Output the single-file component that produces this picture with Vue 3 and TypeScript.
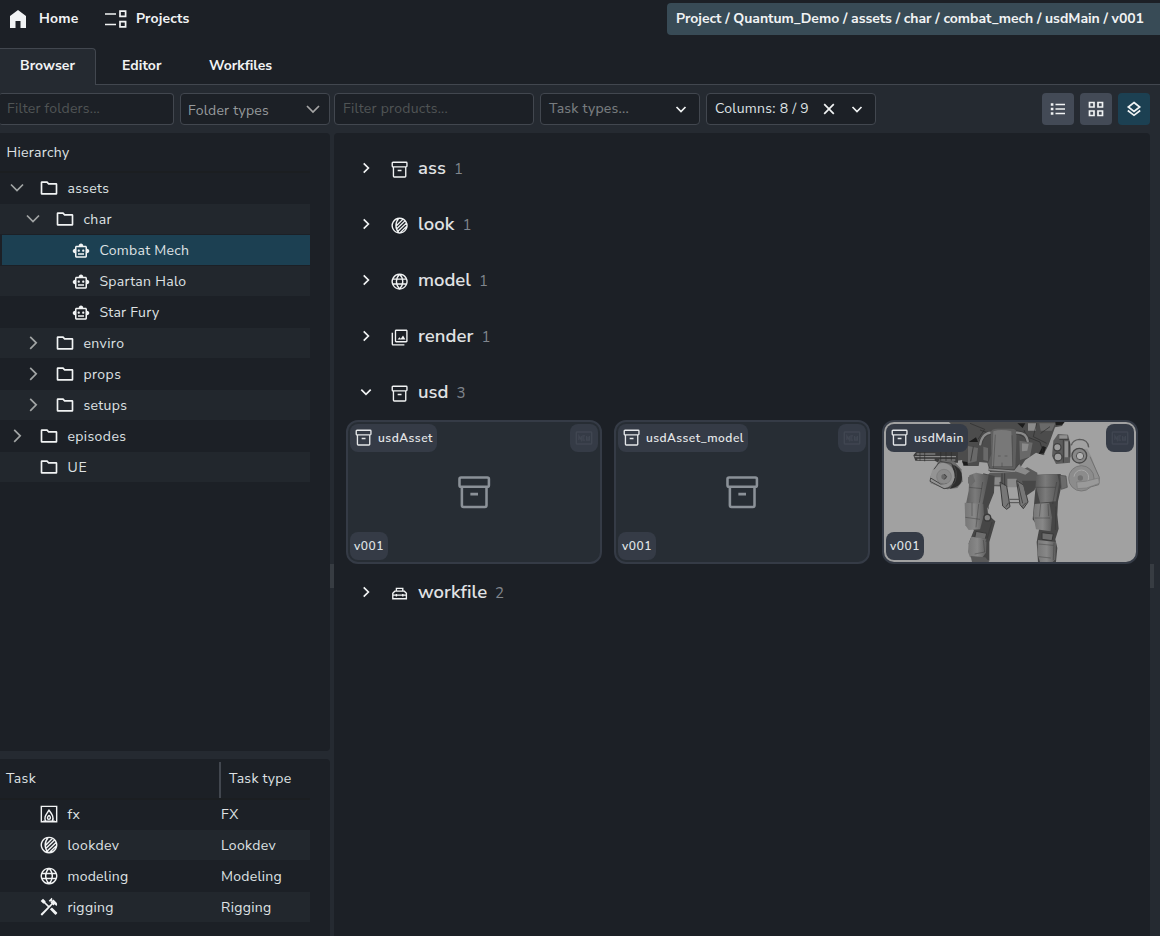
<script setup lang="ts">
interface TreeRow { label: string; depth: number; w: number; icon: string; state: 'open' | 'closed' | 'leaf'; selected?: boolean }
interface Group { name: string; count: number; icon: string; w: number; open?: boolean }

// Tracks a label out (or in) so that it fills the given width in pixels.
const vFit = {
  mounted(el: HTMLElement, binding: { value: number }) {
    const natural = el.getBoundingClientRect().width
    const count = (el.textContent || '').trim().length
    if (count > 0) el.style.letterSpacing = `${(binding.value - natural) / count}px`
  },
}

const solid: Record<string, string> = {
  home: 'M4 21V9l8-6 8 6v12h-5.500v-7h-5v7z',
  folder: 'M9.170 6l2 2H20v10H4V6h5.170M10 4H3.500Q2 4 2 5.500V18.500Q2 20 3.500 20h17Q22 20 22 18.500V7.500Q22 6 20.500 6H12l-2-2z',
  robot: 'M20 9V7c0-1.1-.9-2-2-2h-3c0-1.660-1.340-3-3-3S9 3.340 9 5H6c-1.100 0-2 .9-2 2v2c-1.660 0-3 1.340-3 3s1.340 3 3 3v4c0 1.100.9 2 2 2h12c1.100 0 2-.9 2-2v-4c1.660 0 3-1.340 3-3s-1.340-3-3-3zm-2 10H6V7h12v12zm-9-6c-.83 0-1.500-.67-1.500-1.500S8.170 10 9 10s1.500.67 1.500 1.500S9.830 13 9 13zm7.500-1.500c0 .83-.67 1.500-1.500 1.500s-1.500-.67-1.500-1.500.67-1.500 1.500-1.500 1.500.67 1.500 1.500zM8 15h8v2H8v-2z',
  photos: 'M20.300 3.700v12.600H7.700V3.700h12.600m0-1.700H7.700C6.800 2 6 2.800 6 3.700v12.600c0 .9.8 1.700 1.700 1.700h12.600c.9 0 1.700-.8 1.700-1.700V3.700C22 2.800 21.200 2 20.300 2zM9.500 14.500l2.300-3 1.700 2 2.800-4 3 5zM2 6v14c0 1.100.9 2 2 2h14v-1.800H3.800V6H2z',
  tools: 'M21.670 18.670l-6.100-6.100-2.540 2.100 6.100 6.200q.7.600 1.400 0l1.100-1.200q.6-.5.040-1zM17.340 10.190l1.410-1.410 2.120 2.120c1.170-1.170 1.170-3.070 0-4.240l-3.540-3.540-1.410 1.410V1.710L15.220 1l-3.540 3.540.71.71h2.830l-1.410 1.410 1.060 1.060-2.890 2.890-4.130-4.130V5.060L4.830 2.040 2 4.870 5.030 7.900h1.410l4.130 4.130L2.300 20.100q-.5.600 0 1.200l.7.700q.6.500 1.200 0L16.280 9.140z',
}
const lined: Record<string, string> = {
  archive: 'M3.800 2.800h16.400q1 0 1 1v3.800q0 1-1 1H3.800q-1 0-1-1V3.800q0-1 1-1zM4.300 8.600v11.600q0 1 1 1h13.400q1 0 1-1V8.600M9.600 13.200h4.800',
  look: 'M12 2.800a9.200 9.200 0 1 0 .01 0zM11 3.200C6.200 8 6.200 16 11 20.800M8 12.200L16 4.200M8.500 16L19 5.800M10.200 18.800L20.800 8.600M12.800 20.800L21 12.800',
  globe: 'M12 2.800a9.200 9.200 0 1 0 .01 0zM12 2.800C6.700 8 6.700 16 12 21.200C17.300 16 17.300 8 12 2.800M3.600 9h16.800M3.600 15h16.800',
  toolbox: 'M3.500 18.500V11.500L6 9h12L20.500 11.500V18.500zM8 9V5.500h8V9M3.500 14h17M8 12.500v3M16 12.500v3',
  fire: 'M2.800 2.800h18.400v18.400H2.800zM8 20.500C5.500 16 8.500 13 12 7.500C15.500 12 18.500 16 16 20.500M12 13.500C9.500 16 9.500 18 12 18.500C14.500 18 14 15.500 12 13.500M5 20.500h14',
}

const tree: TreeRow[] = [
  { label: 'assets', depth: 0, w: 42, icon: 'folder', state: 'open' },
  { label: 'char', depth: 1, w: 28.5, icon: 'folder', state: 'open' },
  { label: 'Combat Mech', depth: 2, w: 90, icon: 'robot', state: 'leaf', selected: true },
  { label: 'Spartan Halo', depth: 2, w: 87, icon: 'robot', state: 'leaf' },
  { label: 'Star Fury', depth: 2, w: 60, icon: 'robot', state: 'leaf' },
  { label: 'enviro', depth: 1, w: 41, icon: 'folder', state: 'closed' },
  { label: 'props', depth: 1, w: 38, icon: 'folder', state: 'closed' },
  { label: 'setups', depth: 1, w: 44, icon: 'folder', state: 'closed' },
  { label: 'episodes', depth: 0, w: 59, icon: 'folder', state: 'closed' },
  { label: 'UE', depth: 0, w: 20, icon: 'folder', state: 'leaf' },
]
const tasks = [
  { label: 'fx', type: 'FX', icon: 'fire', w: 13, tw: 18 },
  { label: 'lookdev', type: 'Lookdev', icon: 'look', w: 52, tw: 55 },
  { label: 'modeling', type: 'Modeling', icon: 'globe', w: 61, tw: 61 },
  { label: 'rigging', type: 'Rigging', icon: 'tools', w: 46.5, tw: 50.5 },
]
const groups: Group[] = [
  { name: 'ass', count: 1, icon: 'archive', w: 28 },
  { name: 'look', count: 1, icon: 'look', w: 36.5 },
  { name: 'model', count: 1, icon: 'globe', w: 53 },
  { name: 'render', count: 1, icon: 'photos', w: 55.5 },
  { name: 'usd', count: 3, icon: 'archive', w: 30.5 },
  { name: 'workfile', count: 2, icon: 'toolbox', w: 69 },
]
groups[4].open = true
const cards = [
  { name: 'usdAsset', w: 55, picture: false },
  { name: 'usdAsset_model', w: 98, picture: false },
  { name: 'usdMain', w: 50, picture: true },
]
</script>

<template>
  <div class="app">
    <header class="top">
      <nav class="links">
        <a class="link home"><svg class="i24" viewBox="0 0 24 24"><path class="fill" :d="solid.home" /></svg><span v-fit="39.500">Home</span></a>
        <a class="link projects">
          <svg class="proj" viewBox="0 0 22 18"><path class="line" d="M0 4h11M0 14.500h11M15 1.200h5.600v5.200H15zM15 11.700h5.600v5.200H15z" /></svg>
          <span v-fit="53.500">Projects</span>
        </a>
      </nav>
      <div class="crumbs"><span v-fit="468">Project / Quantum_Demo / assets / char / combat_mech / usdMain / v001</span></div>
    </header>

    <nav class="tabs">
      <a class="tab active"><span v-fit="55">Browser</span></a>
      <a class="tab editor"><span v-fit="39.500">Editor</span></a>
      <a class="tab work"><span v-fit="63">Workfiles</span></a>
      <div class="rule"></div>
    </nav>

    <div class="filters">
      <div class="box folders"><span v-fit="93" class="hint">Filter folders...</span></div>
      <div class="box types"><span v-fit="81" class="soft">Folder types</span><svg class="chev big" viewBox="0 0 14 14"><path class="line" d="M1 4l6 6 6-6" /></svg></div>
      <div class="box products"><span v-fit="105" class="hint">Filter products...</span></div>
      <div class="box tasktypes"><span v-fit="80" class="mid">Task types...</span><svg class="chev" viewBox="0 0 14 14"><path class="line" d="M2.500 5l4.500 4.500L11.500 5" /></svg></div>
      <div class="box columns">
        <span v-fit="94">Columns: 8 / 9</span>
        <svg class="chev cross" viewBox="0 0 14 14"><path class="line" d="M2.200 2.200l9.600 9.600M11.800 2.200l-9.600 9.600" /></svg>
        <svg class="chev" viewBox="0 0 14 14"><path class="line" d="M2.500 5l4.500 4.500L11.500 5" /></svg>
      </div>
      <div class="buttons">
        <button><svg viewBox="0 0 16 16"><path class="line thin" d="M5.500 3.500H15M5.500 8H15M5.500 12.500H15" /><path class="fill" d="M.8 2.200h2.600v2.600H.8zM.8 6.700h2.600v2.600H.8zM.8 11.200h2.600v2.600H.8z" /></svg></button>
        <button><svg viewBox="0 0 16 16"><path class="line" d="M1.500 1.500h4.500v4.500h-4.500zM10 1.500h4.500v4.500H10zM1.500 10h4.500v4.500h-4.500zM10 10h4.500v4.500H10z" /></svg></button>
        <button class="on"><svg viewBox="0 0 16 16"><path class="line" d="M8 1.500L13.700 6 8 10.500 2.300 6zM1.800 9.500L8 14.300l6.200-4.800" /></svg></button>
      </div>
    </div>

    <div class="body">
      <aside>
        <section class="panel hierarchy">
          <div class="head"><span v-fit="63">Hierarchy</span></div>
          <div v-for="r in tree" :key="r.label" class="row" :class="['d' + r.depth, { selected: r.selected }]">
            <svg class="arrow" viewBox="0 0 14 14">
              <path v-if="r.state === 'open'" class="line" d="M1 3.500l6 6 6-6" />
              <path v-if="r.state === 'closed'" class="line" d="M4.200 .8l6 6-6 6" />
            </svg>
            <svg class="ico" :class="r.icon" viewBox="0 0 24 24"><path class="fill" :d="solid[r.icon]" /></svg>
            <span v-fit="r.w" class="text">{{ r.label }}</span>
          </div>
        </section>
        <section class="panel tasks">
          <div class="head two"><div class="first"><span v-fit="30">Task</span></div><div class="second"><span v-fit="62.500">Task type</span></div></div>
          <div v-for="t in tasks" :key="t.label" class="row d0">
            <span class="arrow"></span>
            <svg class="ico" viewBox="0 0 24 24">
              <path v-if="solid[t.icon]" class="fill" :d="solid[t.icon]" />
              <path v-else class="line" :d="lined[t.icon]" />
            </svg>
            <div class="name text"><span v-fit="t.w">{{ t.label }}</span></div>
            <span v-fit="t.tw" class="text">{{ t.type }}</span>
          </div>
        </section>
      </aside>
      <div class="grip"><i></i></div>
      <main class="panel">
        <template v-for="g in groups" :key="g.name">
          <div class="group">
            <svg class="garrow" viewBox="0 0 14 14"><path class="line" :d="g.open ? 'M2.300 4.700L7 9.400l4.700-4.700' : 'M4.700 2.300L9.400 7l-4.700 4.700'" /></svg>
            <svg class="gico" viewBox="0 0 24 24">
              <path v-if="solid[g.icon]" class="fill" :d="solid[g.icon]" />
              <path v-else class="line" :d="lined[g.icon]" />
            </svg>
            <span v-fit="g.w" class="gname">{{ g.name }}</span>
            <span class="count">{{ g.count }}</span>
          </div>
          <div v-if="g.open" class="cards">
            <article v-for="c in cards" :key="c.name" class="card">
              <svg v-if="c.picture" class="mech" viewBox="42 36 756 420" preserveAspectRatio="none">
                <defs>
                  <linearGradient id="plate" x1="0" x2="1"><stop offset="0" stop-color="#5c5c5c" /><stop offset=".4" stop-color="#7b7b7b" /><stop offset="1" stop-color="#555" /></linearGradient>
                  <linearGradient id="shin" x1="0" x2="1"><stop offset="0" stop-color="#777" /><stop offset=".5" stop-color="#888" /><stop offset="1" stop-color="#5e5e5e" /></linearGradient>
                </defs>
                <!-- shoulders and torso mass -->
                <path fill="#4c4c4c" d="M237 36H583L576 48 555 52 550 66 536 104 520 136 498 128 466 150 444 182 360 186 352 158 328 156 326 168H280L276 150 236 156 200 150V120L294 100z" />
                <path fill="#696969" d="M294 108l30 6-4 40-26 6zM340 110l14 4v40l-14-4zM448 92l40 6-8 42-30 10zM508 40h48l-10 22h-34z" />
                <path fill="#8a8a8a" d="M474 40h24v22h-24zM456 100l20 2-4 20-16 2z" />
                <path fill="#1c1c1c" d="M518 108l10 4-6 18-16 2zM296 96l22-14 6 14zM442 40h24l-8 14zM276 154l16 2 2 10h-12zM556 36h28l-8 8-18 2z" />
                <path class="ink" d="M300 40l44 18-20 30M462 60l8 20 40 16 12 38M500 40l-10 40 40 20M440 70l30 14M310 110l-8 44M330 60l34 12M512 70l28-20" />
                <!-- rotary gun -->
                <path fill="#3c3c3c" d="M130 136l8-10h62l22-8 42 6v34H206l-12-6h-58z" />
                <path stroke="#9a9a9a" stroke-width="3" d="M140 132h56M134 140h124M142 148h52M208 150h48" />
                <path class="ink" d="M150 126v26M164 126v28M212 122v32M228 124v34M244 122v30" />
                <!-- arms -->
                <path fill="#6c6c6c" d="M206 152l46 2 22 24 4 36-16 20-30 4-50-18v-22z" />
                <path fill="#2e2e2e" d="M244 162q32 10 32 40t-36 34q22-34 4-74z" />
                <path fill="#949494" d="M182 202q4-42 38-44 34 6 34 44-4 26-30 33l-42-16z" />
                <path fill="none" stroke="#454545" stroke-width="3" d="M192 178l18-24 34 6q22 18 12 54-12 22-34 22l-42-22 2-10 30 18 18-2" />
                <circle cx="222" cy="200" r="22" fill="#8a8a8a" stroke="#777" stroke-width="2" />
                <circle cx="222" cy="200" r="8" fill="#686868" />
                <path class="ink" d="M222 193l8 7-8 9" />
                <path fill="#5c5c5c" d="M550 92l14-20 30 2 8 30-2 54-42 4-12-24z" />
                <g fill="#9c9c9c" stroke="#424242" stroke-width="4"><circle cx="562" cy="112" r="11" /><circle cx="564" cy="141" r="12" /></g>
                <path fill="#909090" d="M568 76h24v10h-24zM584 94h10v48h-10z" />
                <path class="ink" d="M580 90v68M598 94l2 48M568 88h28" />
                <path fill="none" stroke="#5b5b5b" stroke-width="4" d="M604 106q4-16 24-18 26 0 28 24" />
                <path fill="#919191" d="M610 120l42-4 12 24 24 64-2 20-34 2z" />
                <path fill="none" stroke="#707070" stroke-width="3" d="M660 140l28 62-2 22-36 10" />
                <circle cx="628" cy="137" r="22" fill="#888" stroke="#494949" stroke-width="4" />
                <circle cx="630" cy="138" r="11" fill="#b1b1b1" stroke="#555" stroke-width="3" />
                <circle cx="634" cy="205" r="38" fill="#8c8c8c" stroke="#777" stroke-width="3" />
                <path fill="none" stroke="#a8a8a8" stroke-width="3" d="M612 200a22 22 0 1 1 24 24" />
                <circle cx="631" cy="204" r="8" fill="#727272" />
                <path fill="#9a9a9a" stroke="#777" stroke-width="2" d="M620 216l26-2 40-10 2 16-38 14-28 2z" />
                <!-- cockpit -->
                <path fill="#5f5f5f" d="M362 66q4-10 18-10h44q16 0 16 12l-4 110-70 8-12-26 10-28z" />
                <path fill="#787878" d="M370 64q24-8 54 0l4 104H366z" />
                <path fill="none" stroke="#424242" stroke-width="12" d="M362 68q-26 2-32 38M438 68q32-2 36 28" />
                <path fill="none" stroke="#8a8a8a" stroke-width="7" d="M362 68q-26 2-32 38M438 68q32-2 36 28" />
                <path class="ink fine" d="M376 74l-6 102M426 76l2 94M384 138h8M404 138h8M396 158v12" />
                <path fill="none" stroke="#444" stroke-width="10" d="M356 178l78 6 16-20" />
                <path fill="none" stroke="#8a8a8a" stroke-width="5" d="M356 178l78 6 16-20" />
                <!-- hips -->
                <path fill="#5a5a5a" d="M360 188l80-2 32-14 30 16v20l-4 26-38 20-26-30-20 6-54-2-20-20z" />
                <path fill="#8a8a8a" d="M366 202h26v22h-26zM412 206h28v26h-28zM446 166l34 18-14 10-30-10z" />
                <path fill="#777" stroke="#3c3c3c" stroke-width="3" d="M390 216l20 12 10 62-10 8-12-10zM440 212l22 14 12 50-14 20-10-12z" />
                <path fill="#474747" d="M456 212h42l-4 28-26 18z" />
                <path fill="none" stroke="#515151" stroke-width="3" d="M418 268h32M418 278h32" />
                <path class="ink" d="M396 190v34M404 190v36M444 220l14 60M408 290l8-12M456 290l12-12" />
                <!-- left leg -->
                <path fill="#464646" d="M340 190l34 8-2 50-16 40 0 28 20 18-18 62v56h-50l-12-52 16-40-18-14 20-72z" />
                <path fill="#a1a1a1" d="M352 292l8 12-6 8z" />
                <path fill="url(#plate)" d="M298 196l20-8 38 8-12 56-14 66-36 4-6-40 8-40z" />
                <path fill="#6b6b6b" d="M294 202l14-8 8 20-12 12-10-6z" />
                <path fill="url(#shin)" d="M284 278l56 4 2 32-12 44-34 2-10-14z" />
                <path class="ink fine" d="M306 278v40M326 282l-8 70M338 216l-10 62M298 232l38 4M286 322l44 6" />
                <circle cx="352" cy="323" r="10" fill="#838383" stroke="#393939" stroke-width="4" />
                <path fill="#6d6d6d" stroke="#393939" stroke-width="3" d="M318 364l32 6-4 18-32-4z" />
                <path fill="url(#shin)" d="M304 380l46 6-2 42-14 18-34-4-6-16 2-26z" />
                <path fill="#5a5a5a" d="M302 438l44 4 12 14h-52z" />
                <path class="ink fine" d="M340 390l4 36-30 6M366 336l-18 60" />
                <!-- right leg -->
                <path fill="#464646" d="M500 194l72-2 4 28-12 54-2 40 4 42-10 32 6 26-4 42h-54l-4-60 8-42-20-26z" />
                <path fill="url(#plate)" d="M498 196l64-4 6 26-10 56-48 4-12-48z" />
                <path fill="#6c6c6c" stroke="#4b4b4b" stroke-width="2" d="M570 196l18 2 4 34-18 6z" />
                <path fill="url(#shin)" d="M494 282l44-4 8 44-4 42-44-6-8-40z" />
                <path class="ink fine" d="M512 282l-4 38M534 282l2 36M494 324h46M560 216l-12 66M500 232h56M558 290l-2 70" />
                <path fill="#6d6d6d" stroke="#393939" stroke-width="3" d="M516 368l34 4-4 20-30-4z" />
                <path fill="url(#shin)" d="M504 390l54 6-2 52-8 8h-38l-8-26z" />
                <path class="ink fine" d="M506 402l44 4M552 398l-2 52M506 440l36 4" />
              </svg>
              <svg v-else class="placeholder" viewBox="0 0 24 24"><path class="line" :d="lined.archive" /></svg>
              <div class="cardtop">
                <div class="chip title"><svg class="cico" viewBox="0 0 24 24"><path class="line" :d="lined.archive" /></svg><span v-fit="c.w">{{ c.name }}</span></div>
                <div class="chip fresh"><svg viewBox="0 0 24 24"><path class="line" d="M3.500 4.800h17q.7 0 .7.700v13q0 .7-.7.700h-17q-.7 0-.7-.700v-13q0-.7.7-.700z" /><path class="line thin" d="M5.800 14.500v-5l3 5v-5M13.200 9.500h-2.500v5h2.500M10.700 12h2M15 9.500v5h3.500v-5M16.800 10.500v4" /></svg></div>
              </div>
              <div class="chip version"><span v-fit="30">v001</span></div>
            </article>
          </div>
        </template>
      </main>
      <div class="grip right"><i></i></div>
    </div>
  </div>
</template>

<style>
html, body { background: #252a31; overflow: hidden; }
</style>

<style scoped>
.app { width: 1160px; height: 936px; display: flex; flex-direction: column; background: #252a31; color: #dfe2e4; font: 14px/20px "Nunito Sans", Nunito, Lato, "Noto Sans", sans-serif; overflow: hidden; }
.app * { box-sizing: border-box; }
span { white-space: nowrap; }
svg { display: block; flex: none; }
.fill { fill: currentColor; fill-rule: evenodd; }
.line { fill: none; stroke: currentColor; stroke-width: 1.7; }
.thin { stroke-width: 1.4; }
.top { height: 48px; flex: none; background: #1c2026; display: flex; justify-content: space-between; align-items: flex-start; color: #f1f3f4; font-weight: 700; }
.links { display: flex; padding: 8px 0 0 6px; }
.link { display: flex; align-items: center; height: 22px; }
.home { gap: 9px; width: 99px; }
.i24 { width: 24px; height: 24px; }
.projects { gap: 9px; }
.proj { width: 22px; height: 18px; }
.crumbs { margin-top: 3px; width: 493px; height: 32px; padding: 6px 9px; background: #384b56; border-radius: 4px 0 0 4px; }
.tabs { height: 37px; flex: none; display: flex; background: #1c2026; color: #f1f3f4; font-weight: 700; }
.tab { height: 37px; padding-top: 7px; border-bottom: 1px solid #42474f; }
.tab.active { width: 96px; padding-left: 20px; background: #252a31; border: 1px solid #42474f; border-width: 1px 1px 0 0; border-radius: 0 4px 0 0; }
.editor { width: 113px; padding: 8px 0 0 26px; }
.work { width: 63px; padding-top: 8px; }
.rule { flex: 1; border-bottom: 1px solid #42474f; }
.filters { height: 48px; flex: none; display: flex; padding: 8px 10px 8px 0; }
.box { height: 32px; border: 1px solid #42474f; border-radius: 4px; background: #1c2026; display: flex; align-items: center; padding: 0 8px; }
.folders { width: 174px; margin-right: 6px; padding-left: 6px; border-left: 0; padding-left: 7px; border-radius: 2px 4px 4px 2px; }
.types { width: 150px; margin-right: 4px; justify-content: space-between; padding: 4px 9px 0 7px; }
.types .chev { margin-top: -5px; }
.products { width: 200px; margin-right: 6px; }
.tasktypes { width: 160px; margin-right: 6px; justify-content: space-between; padding-right: 11px; }
.columns { width: 170px; }
.columns .cross { margin: 0 14px 0 13px; }
.hint { color: #505455; }
.soft { color: #969a9c; }
.mid { color: #777b7e; font-weight: 500; }
.chev { width: 14px; height: 14px; color: #f1f3f4; }
.chev.big { width: 14px; height: 14px; color: #a5a5a5; }
.buttons { margin-left: auto; display: flex; gap: 6px; }
button { width: 32px; height: 32px; padding: 0; border: 0; border-radius: 4px; background: #434a56; color: #f1f3f4; display: grid; place-items: center; }
button svg { width: 16px; height: 16px; }
button.on { background: #1c4052; }
.body { flex: 1; min-height: 0; display: flex; }
.panel { background: #1c2026; }
aside { width: 330px; display: flex; flex-direction: column; gap: 8px; }
.hierarchy { height: 618px; border-radius: 0 4px 4px 0; }
.tasks { flex: 1; border-radius: 0 4px 0 0; }
.head { width: 310px; height: 40px; padding: 10px 6px 8px 6.500px; border-bottom: 2px solid #1b1e21; }
.head.two { display: flex; padding: 3px 0 0 6px; height: 41px; margin-bottom: -1px; }
.first { width: 215px; padding-top: 7px; border-right: 2px solid #42474f; }
.second { padding: 7px 0 0 8px; }
.row { width: 310px; height: 31px; border-bottom: 1px solid #1c2026; display: flex; align-items: center; padding-left: 10px; }
.row:nth-child(odd) { background: #22272d; }
.d1 { padding-left: 26px; }
.d2 { padding-left: 42px; }
.row.selected { background: #1c4052; margin-left: 2px; width: 308px; padding-left: 40px; }
.text { padding-top: 2px; }
.arrow { width: 14px; height: 14px; flex: none; color: #a2a5a5; }
.ico { width: 20px; height: 20px; margin: 0 8.800px 0 14.600px; color: #f1f3f4; }
.ico.robot { width: 18px; height: 18px; margin: 1px 9.800px 0 15.600px; }
.name { width: 153.600px; }
.grip { width: 4px; padding-top: 431px; }
.grip i { display: block; width: 4px; height: 24px; background: #373c42; }
main { width: 816px; padding: 7px 12px; border-radius: 4px 4px 0 0; }
.group { height: 56px; display: flex; align-items: center; padding-left: 13px; color: #f1f3f4; }
.garrow { width: 14px; height: 14px; }
.gico { width: 19.200px; height: 19.200px; margin: 3px 8.400px 0 17.400px; }
.gname { font-size: 18.500px; line-height: 24px; font-weight: 600; color: #e0e2e4; }
.count { margin: 2px 0 0 8px; font-size: 15px; color: #80868d; }
.cards { display: flex; gap: 12px; height: 144px; }
.card { position: relative; width: 256px; height: 144px; border: 2px solid #353b46; border-radius: 12px; background: #272d34; overflow: hidden; padding: 2px; display: flex; flex-direction: column; justify-content: space-between; align-items: flex-start; }
.mech { position: absolute; inset: 0; width: 252px; height: 140px; background: #a1a1a1; }
.ink { fill: none; stroke: #2e2e2e; stroke-width: 2.500; opacity: .8; }
.fine { stroke-width: 2; opacity: .55; }
.placeholder { position: absolute; left: 106.800px; top: 50.800px; width: 38.400px; height: 38.400px; color: #8b9198; }
.placeholder .line { stroke-width: 1.6; }
.cardtop { position: relative; display: flex; justify-content: space-between; width: 100%; }
.chip { height: 28px; border-radius: 8px; background: #353b46; display: flex; align-items: center; padding: 0 4px; font-size: 12px; font-weight: 600; }
.title { color: #e4e6e8; }
.cico { width: 19.200px; height: 19.200px; margin: 0 4.400px 0 .400px; }
.fresh { width: 28px; padding: 4px; color: #404651; }
.fresh svg { width: 20px; height: 20px; }
.version { position: relative; width: 38px; }
</style>
